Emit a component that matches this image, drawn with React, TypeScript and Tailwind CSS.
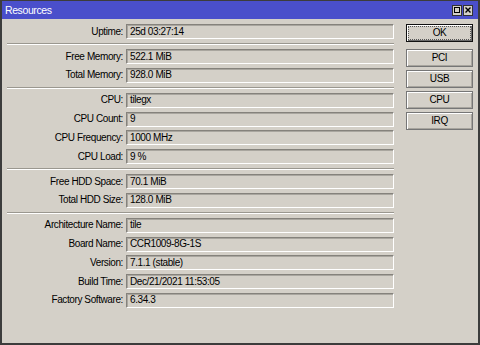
import React from 'react';

type Row = { label: string; value: string };

const sections: Row[][] = [
  [{ label: 'Uptime:', value: '25d 03:27:14' }],
  [
    { label: 'Free Memory:', value: '522.1 MiB' },
    { label: 'Total Memory:', value: '928.0 MiB' },
  ],
  [
    { label: 'CPU:', value: 'tilegx' },
    { label: 'CPU Count:', value: '9' },
    { label: 'CPU Frequency:', value: '1000 MHz' },
    { label: 'CPU Load:', value: '9 %' },
  ],
  [
    { label: 'Free HDD Space:', value: '70.1 MiB' },
    { label: 'Total HDD Size:', value: '128.0 MiB' },
  ],
  [
    { label: 'Architecture Name:', value: 'tile' },
    { label: 'Board Name:', value: 'CCR1009-8G-1S' },
    { label: 'Version:', value: '7.1.1 (stable)' },
    { label: 'Build Time:', value: 'Dec/21/2021 11:53:05' },
    { label: 'Factory Software:', value: '6.34.3' },
  ],
];

const Field = ({ label, value }: Row) => (
  <div className="flex items-center h-[15px]">
    <div className="w-[116px] text-right whitespace-nowrap">{label}</div>
    <div className="ml-[3px] w-[268px] h-[15px] flex items-center pl-[3px] border border-t-[#85827c] border-l-[#85827c] border-r-white border-b-white shadow-[inset_1px_1px_0_#a9a69f] whitespace-nowrap">
      {value}
    </div>
  </div>
);

const Button = ({ children, primary }: { children: React.ReactNode; primary?: boolean }) => (
  <button
    className={
      'w-[67px] h-[18px] flex items-center justify-center bg-[#d4d0c8] ' +
      (primary
        ? 'border border-[#111] shadow-[inset_1px_1px_0_#ffffff,inset_-1px_-1px_0_#6a6a6a]'
        : 'border border-[#767676] shadow-[inset_1px_1px_0_#ffffff,inset_-1px_-1px_0_#a8a59e]')
    }
  >
    {primary ? (
      <span className="w-[61px] h-[12px] flex items-center justify-center outline outline-1 outline-dotted outline-[#555]">
        {children}
      </span>
    ) : (
      children
    )}
  </button>
);

export default function App() {
  return (
    <div
      className="w-[480px] h-[345px] bg-[#d4d0c8] border-t border-x-2 border-b-2 border-[#3c3c3c] flex flex-col text-[10px] leading-[12px] tracking-[-0.4px] text-black"
      style={{ fontFamily: '"Liberation Sans", Arial, sans-serif' }}
    >
      {/* title bar */}
      <div className="h-[18px] bg-[#4a4fcb] flex items-center justify-between pl-[3px] pr-[5px]">
        <span className="text-white text-[10.5px]">Resources</span>
        <div className="flex gap-px">
          <div className="w-[10px] h-[11px] bg-[#d4d0c8] border border-[#333] flex items-center justify-center">
            <div className="w-[6px] h-[6px] border border-black" />
          </div>
          <div className="w-[10px] h-[11px] bg-[#d4d0c8] border border-[#333] flex items-center justify-center">
            <svg width="6" height="6" viewBox="0 0 6 6">
              <path d="M0.5 0.5 L5.5 5.5 M5.5 0.5 L0.5 5.5" stroke="#000" strokeWidth="1.4" />
            </svg>
          </div>
        </div>
      </div>

      <div className="flex pt-[5px] pl-[5px]">
        {/* fields */}
        <div className="w-[387px] flex flex-col">
          {sections.map((sec, i) => (
            <div key={i}>
              {i > 0 && <div className="my-[4px] h-[2px] border-t border-t-[#9a978f] border-b border-b-white" />}
              <div className="flex flex-col gap-[3.75px]">
                {sec.map((r) => (
                  <Field key={r.label} {...r} />
                ))}
              </div>
            </div>
          ))}
        </div>

        {/* buttons */}
        <div className="ml-[12px] flex flex-col gap-[3px]">
          <div className="mb-[4px]">
            <Button primary>OK</Button>
          </div>
          <Button>PCI</Button>
          <Button>USB</Button>
          <Button>CPU</Button>
          <Button>IRQ</Button>
        </div>
      </div>
    </div>
  );
}
